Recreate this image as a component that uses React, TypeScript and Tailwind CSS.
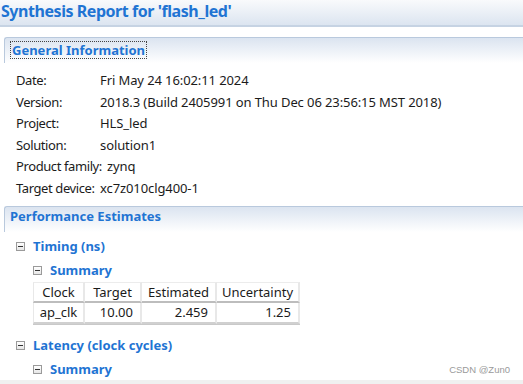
import React from "react";

const Minus = () => (
  <span className="inline-flex w-[9px] h-[9px] border border-[#9a9a9a] bg-gradient-to-b from-white to-[#e6e6e6] items-center justify-center mr-[8px] shrink-0">
    <span className="block w-[5px] h-px bg-[#333]" />
  </span>
);

const SectionHeader = ({ children }: { children: React.ReactNode }) => (
  <div className="ml-[4px] h-[26px] rounded-tl-[3px] border-t border-l border-[#b9c9dd] bg-gradient-to-b from-[#dbe4f0] to-white flex items-center pl-[5px]">
    {children}
  </div>
);

const rows: [string, string, string][] = [
  ["Date:", "Fri May 24 16:02:11 2024", "w-[84px]"],
  ["Version:", "2018.3 (Build 2405991 on Thu Dec 06 23:56:15 MST 2018)", "w-[84px]"],
  ["Project:", "HLS_led", "w-[84px]"],
  ["Solution:", "solution1", "w-[84px]"],
  ["Product family:", "zynq", "w-[91px]"],
  ["Target device:", "xc7z010clg400-1", "w-[84px]"],
];

export default function App() {
  return (
    <div className="relative w-[523px] h-[384px] overflow-hidden bg-white font-['Noto_Sans',sans-serif] text-[#1b1b1b]">
      {/* title bar */}
      <div className="h-[27px] bg-gradient-to-b from-[#f9fafc] to-[#dce5f0] border-b-2 border-[#c6d3e3] flex items-center pl-[1px]">
        <span className="text-[16px] font-bold text-[#1f74d3] tracking-[-0.45px] leading-none -mt-[4px]">
          Synthesis Report for 'flash_led'
        </span>
      </div>

      <div className="mt-[10px]">
        <SectionHeader>
          <span className="border border-dotted border-[#444] px-[1px] py-[1px] text-[13px] font-bold text-[#1f74d3] leading-[14px] -mt-[2px]">
            General Information
          </span>
        </SectionHeader>

        <div className="pt-[7px] pl-[16px] text-[13px] tracking-[-0.1px]">
          {rows.map(([k, v, w]) => (
            <div key={k} className="h-[21.6px] flex items-center whitespace-nowrap">
              <span className={`${w} shrink-0 tracking-[-0.4px]`}>{k}</span>
              <span>{v}</span>
            </div>
          ))}
        </div>

        <div className="mt-[6px]">
          <SectionHeader>
            <span className="text-[13px] font-bold text-[#1f74d3] -mt-[4px]">Performance Estimates</span>
          </SectionHeader>
        </div>

        <div className="pl-[16px] text-[13px] font-bold text-[#1f74d3]">
          <div className="h-[24px] mt-[3px] flex items-center">
            <Minus />
            <span>Timing (ns)</span>
          </div>
          <div className="h-[24px] pl-[17px] flex items-center">
            <Minus />
            <span>Summary</span>
          </div>
        </div>

        <div className="pl-[33px] -mt-[1px]">
          <table className="border-separate border-spacing-0 text-[13px] font-normal text-[#1b1b1b] shadow-[0_1px_0_#c9c9c9]">
            <thead>
              <tr className="h-[21px]">
                {[
                  ["Clock", "w-[52px]"],
                  ["Target", "w-[57px]"],
                  ["Estimated", "w-[75px]"],
                  ["Uncertainty", "w-[83px]"],
                ].map(([h, w]) => (
                  <th
                    key={h}
                    className={`${w} font-normal text-center border-r-2 border-b-2 border-r-[#e8e8e8] border-b-[#bdbdbd] first:border-l first:border-l-[#e8e8e8] border-t border-t-[#ececec] leading-[18px] p-0`}
                  >
                    {h}
                  </th>
                ))}
              </tr>
            </thead>
            <tbody>
              <tr className="h-[21px]">
                <td className="text-center border-l border-l-[#e8e8e8] border-r-2 border-r-[#e8e8e8] border-b-2 border-b-[#d0d0d0] p-0 leading-[18px]">ap_clk</td>
                <td className="text-right pr-[7px] border-r-2 border-r-[#e8e8e8] border-b-2 border-b-[#d0d0d0] p-0 leading-[18px]">10.00</td>
                <td className="text-right pr-[7px] border-r-2 border-r-[#e8e8e8] border-b-2 border-b-[#d0d0d0] p-0 leading-[18px]">2.459</td>
                <td className="text-right pr-[7px] border-r-2 border-r-[#e8e8e8] border-b-2 border-b-[#d0d0d0] p-0 leading-[18px]">1.25</td>
              </tr>
            </tbody>
          </table>
        </div>

        <div className="pl-[16px] text-[13px] font-bold text-[#1f74d3]">
          <div className="h-[24px] mt-[10px] flex items-center">
            <Minus />
            <span>Latency (clock cycles)</span>
          </div>
          <div className="h-[24px] pl-[17px] flex items-center">
            <Minus />
            <span>Summary</span>
          </div>
        </div>
      </div>

      <div className="absolute right-[13px] bottom-[7px] text-[9.5px] text-[#9a9a9a] font-['Liberation_Sans',sans-serif]">
        CSDN @Zun0
      </div>
      <div className="absolute left-0 right-0 bottom-0 h-[4px] bg-[#f0f0f0]" />
    </div>
  );
}
